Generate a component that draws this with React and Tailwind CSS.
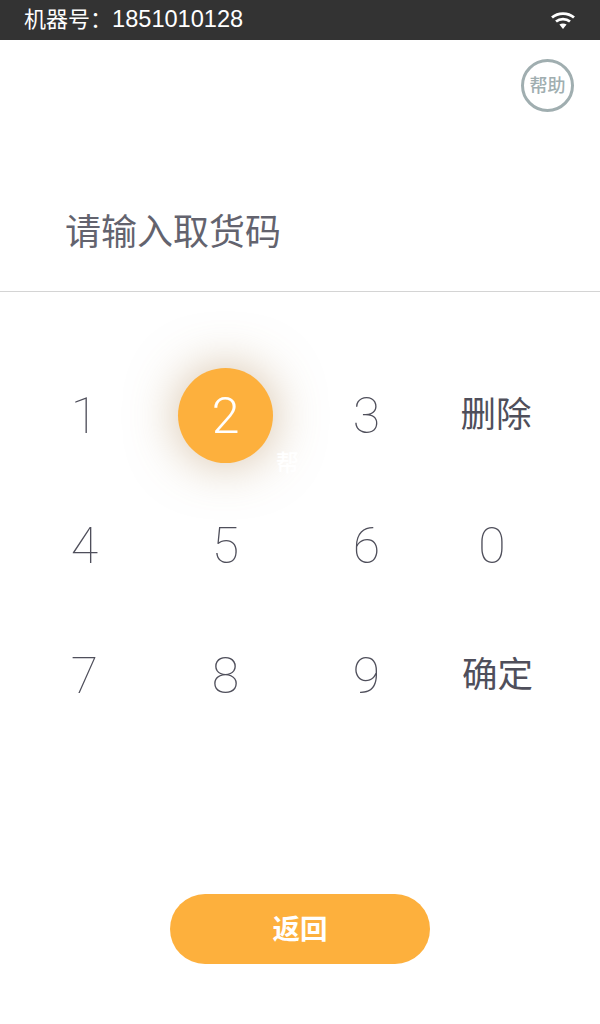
const cjk = "font-['Liberation_Sans','Noto_Sans_CJK_SC',sans-serif]";

const rows = [
  ['1', '2', '3', '删除'],
  ['4', '5', '6', '0'],
  ['7', '8', '9', '确定'],
];

function Wifi() {
  return (
    <svg width="26" height="20" viewBox="0 0 26 20" fill="none">
      <path d="M2 7.5C8 2.2 18 2.2 24 7.5" stroke="white" strokeWidth="2.8" />
      <path d="M6 11.5C10 8.2 16 8.2 20 11.5" stroke="white" strokeWidth="2.8" />
      <path d="M9.4 14.6C11.6 13 14.4 13 16.6 14.6L13 19Z" fill="white" />
    </svg>
  );
}

function Key({ label }) {
  if (label === '2') {
    return (
      <div className="relative flex w-[141px] justify-center">
        <div className="flex h-[95px] w-[95px] items-center justify-center rounded-full bg-[#fdb03d] pt-[1px] font-['Roboto',sans-serif] text-[50px] font-light text-white shadow-[0_0_50px_rgba(170,125,70,0.5)]">
          2
        </div>
        <span className={`absolute left-[121px] top-[78px] text-[23px] font-medium text-white ${cjk}`}>帮</span>
      </div>
    );
  }
  if (label.length > 1) {
    return (
      <div className={`flex w-[118px] justify-center text-[35.5px] font-normal text-[#4f4f5b] ${label === '确定' ? 'pl-[3px]' : ''} ${cjk}`}>{label}</div>
    );
  }
  return (
    <div className={`flex justify-center pt-[2px] font-['Roboto',sans-serif] text-[50px] font-thin text-[#4f4f5b] ${label === '0' ? 'w-[110px]' : 'w-[141px]'}`}>
      {label}
    </div>
  );
}

export default function App() {
  return (
    <div className={`flex h-[1024px] w-[600px] flex-col overflow-hidden bg-white ${cjk}`}>
      <div className="flex h-10 items-center justify-between bg-[#333333] pl-6 pr-[24px] text-[22px] text-white">
        <span>
          机器号：<span className="text-[23.6px]">1851010128</span>
        </span>
        <Wifi />
      </div>

      <div className="flex justify-end pr-[26px] pt-[19px]">
        <div className="flex h-[53px] w-[53px] items-center justify-center rounded-full border-[3px] border-[#a0aeb0] pt-[2px] text-[18px] font-medium text-[#a0aeb0]">
          帮助
        </div>
      </div>

      <div className="mt-[80px] h-[100px] border-b border-[#d4d4d4] pl-[65px] pt-[18px] text-[36px] font-normal leading-[46px] text-[#63636e]">
        请输入取货码
      </div>

      <div className="mt-[76px] flex flex-col gap-[35px] pl-[14px]">
        {rows.map((row) => (
          <div key={row[0]} className="flex h-[95px] items-center">
            {row.map((label) => (
              <Key key={label} label={label} />
            ))}
          </div>
        ))}
      </div>

      <div className="mt-[171px] flex justify-center">
        <button className="flex h-[70px] w-[260px] items-center justify-center rounded-full bg-[#fdb03d] pt-[2px] text-[27.5px] font-bold text-white">
          返回
        </button>
      </div>
    </div>
  );
}
